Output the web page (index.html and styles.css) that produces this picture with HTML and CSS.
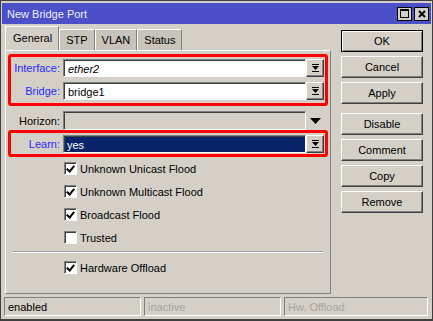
FILE: index.html
```html
<!DOCTYPE html>
<html lang="en">
<head>
  <meta charset="UTF-8">
  <title>New Bridge Port</title>
  <link rel="stylesheet" href="styles.css">
</head>
<body>
  <div class="window">
    <div class="titlebar">
      <span class="title">New Bridge Port</span>
      <div class="title-buttons">
        <span class="tbtn"><span class="max-icon"></span></span>
        <span class="tbtn"><svg width="8" height="8" viewBox="0 0 8 8"><path d="M1 1L7 7M7 1L1 7" stroke="#000" stroke-width="2"/></svg></span>
      </div>
    </div>

    <div class="main">
      <div class="left">
        <div class="tabs">
          <span class="tab active">General</span>
          <span class="tab">STP</span>
          <span class="tab">VLAN</span>
          <span class="tab">Status</span>
        </div>
        <div class="panel">
          <div class="group hl first">
            <div class="row">
              <label class="lbl blue">Interface:</label>
              <div class="field"><em>ether2</em></div>
              <span class="dd"><svg width="9" height="10" viewBox="0 0 9 10"><rect x="1" y="1" width="7" height="1" fill="#000"/><path d="M1 3h7L4.5 7z" fill="#000"/><rect x="1" y="8" width="7" height="1" fill="#000"/></svg></span>
            </div>
            <div class="row">
              <label class="lbl blue">Bridge:</label>
              <div class="field">bridge1</div>
              <span class="dd"><svg width="9" height="10" viewBox="0 0 9 10"><rect x="1" y="1" width="7" height="1" fill="#000"/><path d="M1 3h7L4.5 7z" fill="#000"/><rect x="1" y="8" width="7" height="1" fill="#000"/></svg></span>
            </div>
          </div>

          <div class="group plain">
            <div class="row">
              <label class="lbl">Horizon:</label>
              <div class="field off"></div>
              <span class="arrow"><svg width="11" height="6" viewBox="0 0 11 6"><path d="M0 0h11L5.5 6z" fill="#000"/></svg></span>
            </div>
          </div>

          <div class="group hl second">
            <div class="row">
              <label class="lbl blue">Learn:</label>
              <div class="field sel">yes</div>
              <span class="dd"><svg width="9" height="10" viewBox="0 0 9 10"><rect x="1" y="1" width="7" height="1" fill="#000"/><path d="M1 3h7L4.5 7z" fill="#000"/><rect x="1" y="8" width="7" height="1" fill="#000"/></svg></span>
            </div>
          </div>

          <div class="checks">
            <div class="check"><span class="box on"></span>Unknown Unicast Flood</div>
            <div class="check"><span class="box on"></span>Unknown Multicast Flood</div>
            <div class="check"><span class="box on"></span>Broadcast Flood</div>
            <div class="check"><span class="box"></span>Trusted</div>
          </div>
          <hr class="sep">
          <div class="checks">
            <div class="check"><span class="box on"></span>Hardware Offload</div>
          </div>
        </div>
      </div>

      <div class="actions">
        <button class="btn default">OK</button>
        <button class="btn">Cancel</button>
        <button class="btn">Apply</button>
        <button class="btn gap">Disable</button>
        <button class="btn">Comment</button>
        <button class="btn">Copy</button>
        <button class="btn">Remove</button>
      </div>
    </div>

    <div class="statusbar">
      <span class="cell">enabled</span>
      <span class="cell dim">inactive</span>
      <span class="cell dim wide">Hw. Offload</span>
    </div>
  </div>
</body>
</html>
```

FILE: styles.css
```css
html, body {
  margin: 0;
  padding: 0;
}

body {
  width: 433px;
  height: 321px;
  overflow: hidden;
  font-family: "Liberation Sans", Arial, sans-serif;
  font-size: 11px;
  color: #000;
  background: #d4d0c8;
}

.window {
  box-sizing: border-box;
  width: 433px;
  height: 321px;
  border: 1px solid #404040;
  border-bottom-width: 2px;
  padding: 2px 1px 2px 1px;
  background: #d4d0c8;
  display: flex;
  flex-direction: column;
}

.titlebar {
  height: 21px;
  background: #4b50c8;
  display: flex;
  align-items: center;
  justify-content: space-between;
  padding: 0 2px 0 5px;
  flex: none;
}

.title {
  color: #eeeeff;
  font-size: 11px;
}

.title-buttons {
  display: flex;
  gap: 2px;
}

.tbtn {
  width: 15px;
  height: 14px;
  box-sizing: border-box;
  background: #d4d0c8;
  border: 1px solid #000;
  display: flex;
  align-items: center;
  justify-content: center;
}

.max-icon {
  box-sizing: border-box;
  width: 9px;
  height: 9px;
  border: 1px solid #000;
  border-top-width: 2px;
}

.main {
  display: flex;
  flex: 1;
  padding-top: 2px;
}

.left {
  width: 326px;
  margin-left: 3px;
  display: flex;
  flex-direction: column;
}

.tabs {
  display: flex;
  align-items: flex-end;
  height: 24px;
  flex: none;
}

.tab {
  box-sizing: border-box;
  height: 21px;
  padding: 0 6px;
  display: flex;
  align-items: center;
  background: #c8c4bc;
  border: 1px solid #fff;
  border-bottom: none;
  border-right-color: #808080;
  font-size: 11px;
}

.tab.active {
  height: 24px;
  padding: 0 6px 2px 7px;
  background: #d4d0c8;
}

.panel {
  flex: 1;
  border-top: 1px solid #fff;
  border-left: 1px solid #fff;
  border-right: 1px solid #808080;
  border-bottom: 1px solid #808080;
  padding: 0 2px;
}

.group {
  border: 3px solid transparent;
  border-radius: 3px;
}

.group.hl {
  border-color: #f00;
}

.group.first {
  margin-top: 3px;
  padding: 2px 0 3px;
}

.group.plain {
  margin-top: 5px;
  border-top-width: 0;
  border-bottom-width: 0;
}

.group.second {
  padding: 2px 0 1px;
}

.row {
  display: flex;
  align-items: center;
  height: 18px;
}

.row + .row {
  margin-top: 5px;
}

.plain .row {
  height: 19px;
  margin-bottom: 0;
}

.lbl {
  box-sizing: border-box;
  width: 52px;
  text-align: right;
  padding-right: 3px;
  font-size: 11px;
}

.blue {
  color: #2a2aff;
}

.field {
  box-sizing: border-box;
  width: 243px;
  height: 18px;
  background: #fff;
  border: 1px solid #808080;
  border-right-color: #fff;
  border-bottom-color: #fff;
  box-shadow: inset 1px 1px 0 #404040;
  padding: 2px 4px 0;
  font-size: 11px;
  line-height: 14px;
}

.field em {
  font-style: italic;
}

.field.off {
  height: 19px;
  background: #d4d0c8;
}

.field.sel {
  background: #0a246a;
  color: #fff;
  padding-left: 3px;
}

.dd {
  box-sizing: border-box;
  width: 18px;
  height: 18px;
  background: #d4d0c8;
  border: 1px solid #fff;
  border-right-color: #404040;
  border-bottom-color: #404040;
  box-shadow: inset -1px -1px 0 #808080;
  display: flex;
  align-items: center;
  justify-content: center;
}

.arrow {
  width: 18px;
  display: flex;
  justify-content: center;
}

.checks {
  padding-left: 56px;
}

.check {
  display: flex;
  align-items: center;
  height: 23px;
  font-size: 11px;
}

.box {
  box-sizing: border-box;
  width: 13px;
  height: 13px;
  margin-right: 3px;
  background: #fff;
  border: 1px solid #808080;
  border-right-color: #fff;
  border-bottom-color: #fff;
  box-shadow: inset 1px 1px 0 #404040;
  position: relative;
}

.box.on::after {
  content: "";
  position: absolute;
  left: 3px;
  top: 1px;
  width: 3px;
  height: 6px;
  border: solid #000;
  border-width: 0 2px 2px 0;
  transform: rotate(40deg);
}

.sep {
  margin: 2px 5px 3px 4px;
  border: none;
  border-top: 1px solid #a0a0a0;
  border-bottom: 1px solid #fff;
}

.actions {
  display: flex;
  flex-direction: column;
  margin-left: 10px;
  padding-top: 4px;
  gap: 4px;
}

.btn {
  box-sizing: border-box;
  width: 82px;
  height: 22px;
  padding: 0;
  background: #d4d0c8;
  border: 1px solid #fff;
  border-right-color: #404040;
  border-bottom-color: #404040;
  box-shadow: inset -1px -1px 0 #808080;
  font-family: "Liberation Sans", Arial, sans-serif;
  font-size: 11px;
  color: #000;
}

.btn.default {
  border: 1px solid #000;
  box-shadow: inset 1px 1px 0 #fff, inset -1px -1px 0 #808080;
}

.btn.gap {
  margin-top: 5px;
}

.statusbar {
  display: flex;
  gap: 3px;
  height: 19px;
  margin: 3px 0 1px;
  padding: 0 3px 0 2px;
  flex: none;
}

.cell {
  width: 137px;
  box-sizing: border-box;
  border: 1px solid #808080;
  border-right-color: #fff;
  border-bottom-color: #fff;
  padding: 2px 3px;
  font-size: 11px;
  line-height: 14px;
}

.cell.wide {
  flex: 1;
}

.cell.dim {
  color: #a8a4a0;
}
```
